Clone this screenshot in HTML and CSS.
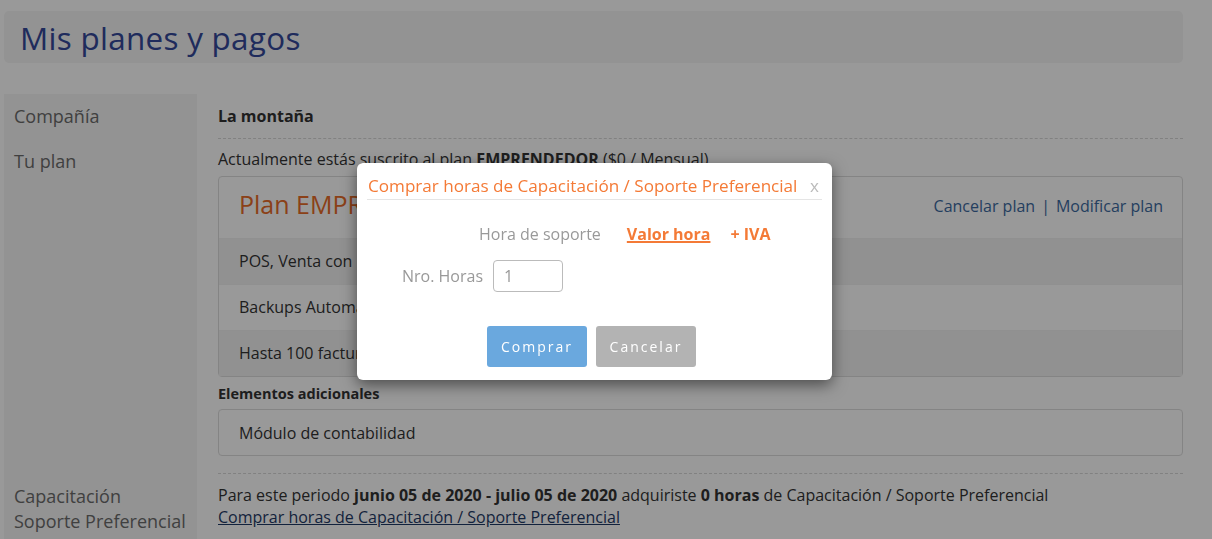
FILE: index.html
```html
<!DOCTYPE html>
<html lang="es">
<head>
    <meta charset="UTF-8">
    <meta name="viewport" content="width=device-width, initial-scale=1.0">
    <title>Mis planes y pagos</title>
    <link rel="stylesheet" href="styles.css">
</head>
<body>
    <div class="page">
        <div class="page-header">
            <h1>Mis planes y pagos</h1>
        </div>

        <div class="settings">
            <div class="labels">
                <div class="label label-company">Compañía</div>
                <div class="label label-plan">Tu plan</div>
                <div class="label label-support">Capacitación<br>Soporte Preferencial</div>
            </div>

            <div class="values">
                <div class="company">La montaña</div>
                <hr class="dashed">

                <p class="current">Actualmente estás suscrito al plan <b>EMPRENDEDOR</b> ($0 / Mensual)</p>
                <div class="plan">
                    <div class="plan-head">
                        <span class="plan-name">Plan EMPRENDEDOR</span>
                        <span class="plan-links"><a href="#">Cancelar plan</a><span class="sep">|</span><a href="#">Modificar plan</a></span>
                    </div>
                    <div class="plan-row striped">POS, Venta con inventario, Compras, Cuentas por Pagar, Cuentas por Cobrar</div>
                    <div class="plan-row">Backups Automáticos diarios</div>
                    <div class="plan-row striped">Hasta 100 facturas electrónicas al mes</div>
                </div>

                <div class="extras-title">Elementos adicionales</div>
                <div class="extras">Módulo de contabilidad</div>
                <hr class="dashed dashed-low">

                <p class="period">Para este periodo <b>junio 05 de 2020 - julio 05 de 2020</b> adquiriste <b>0 horas</b> de Capacitación / Soporte Preferencial<br>
                <a href="#" class="buy-link">Comprar horas de Capacitación / Soporte Preferencial</a></p>
            </div>
        </div>
    </div>

    <div class="overlay"></div>

    <div class="modal">
        <div class="modal-head">
            <span class="modal-title">Comprar horas de Capacitación / Soporte Preferencial</span>
            <span class="modal-close">x</span>
        </div>
        <div class="price-line">
            <span class="price-label">Hora de soporte</span>
            <a href="#" class="price-value">Valor hora</a>
            <span class="price-iva">+ IVA</span>
        </div>
        <div class="hours-line">
            <label for="hours">Nro. Horas</label>
            <input type="text" id="hours" value="1">
        </div>
        <div class="modal-buttons">
            <button class="btn-buy">Comprar</button>
            <button class="btn-cancel">Cancelar</button>
        </div>
    </div>
</body>
</html>
```

FILE: styles.css
```css
body {
    margin: 0;
    font-family: "Open Sans", Arial, sans-serif;
    font-size: 16px;
    color: #333;
    background: #fff;
}
.page {
    padding: 11px 29px 0 4px;
}
.page-header {
    background: #f5f5f5;
    border-radius: 5px;
    height: 52px;
    padding-left: 16px;
    display: flex;
    align-items: center;
}
.page-header h1 {
    margin: 0;
    font-size: 31.4px;
    font-weight: normal;
    color: #34499a;
    letter-spacing: 0.3px;
}
.settings {
    display: flex;
    margin-top: 31px;
}
.labels {
    width: 193px;
    flex: none;
    background: #f5f5f5;
    padding: 10px 0 0 10px;
    box-sizing: border-box;
    color: #6b6b6b;
    font-size: 18px;
    min-height: 460px;
}
.label-plan {
    margin-top: 21px;
}
.label-support {
    margin-top: 311px;
    line-height: 25px;
}
.values {
    flex: 1;
    padding: 11px 0 0 21px;
}
.company {
    font-weight: bold;
    line-height: 22px;
}
hr.dashed {
    border: 0;
    border-top: 1px dashed #d8d8d8;
    margin: 11px 0 0;
}
hr.dashed-low {
    margin-top: 17px;
}
.current {
    margin: 10px 0 7px;
    line-height: 20px;
}
.plan {
    border: 1px solid #ddd;
    border-radius: 4px;
}
.plan-head {
    display: flex;
    justify-content: space-between;
    align-items: flex-start;
    height: 61px;
    padding: 10px 19px 0 20px;
    box-sizing: border-box;
}
.plan-name {
    font-size: 25px;
    color: #e86c28;
}
.plan-links {
    font-size: 16px;
    margin-top: 8px;
}
.plan-links a {
    color: #3d6a9f;
    text-decoration: none;
}
.plan-links .sep {
    color: #3d6a9f;
    margin: 0 6px;
}
.plan-row {
    height: 45px;
    line-height: 45px;
    padding-left: 20px;
    border-top: 1px solid #f0f0f0;
}
.plan-row.striped {
    background: #f2f2f2;
}
.extras-title {
    font-size: 14.5px;
    font-weight: bold;
    margin-top: 6px;
    line-height: 22px;
}
.extras {
    border: 1px solid #ddd;
    border-radius: 4px;
    height: 45px;
    line-height: 47px;
    padding-left: 20px;
    margin-top: 4px;
}
.period {
    margin: 10px 0 0;
    line-height: 22px;
}
.buy-link {
    color: #1f3a66;
}
.overlay {
    position: fixed;
    inset: 0;
    background: rgba(0, 0, 0, 0.4);
}
.modal {
    position: absolute;
    left: 357px;
    top: 163px;
    width: 475px;
    height: 217px;
    background: #fff;
    border-radius: 6px;
    box-shadow: 0 5px 15px rgba(0, 0, 0, 0.5);
    padding: 0 10px;
    box-sizing: border-box;
}
.modal-head {
    display: flex;
    justify-content: space-between;
    align-items: flex-start;
    height: 37px;
    box-sizing: border-box;
    padding: 12px 1px 0;
    border-bottom: 1px solid #e5e5e5;
}
.modal-title {
    color: #f47a36;
    font-size: 17.1px;
    line-height: 22px;
}
.modal-close {
    color: #bbb;
    font-size: 17px;
    line-height: 22px;
    margin-right: 2px;
}
.price-line {
    display: flex;
    align-items: center;
    margin: 23px 0 0 112px;
}
.price-label {
    color: #999;
}
.price-value {
    color: #f47a36;
    font-weight: bold;
    margin-left: 26px;
    text-decoration-thickness: 2px;
}
.price-iva {
    color: #f47a36;
    font-weight: bold;
    margin-left: 20px;
}
.hours-line {
    display: flex;
    align-items: center;
    margin: 15px 0 0 35px;
    color: #999;
}
.hours-line input {
    width: 70px;
    height: 32px;
    box-sizing: border-box;
    border: 1px solid #bbb;
    border-radius: 4px;
    margin-left: 10px;
    padding: 0 10px;
    font-family: inherit;
    font-size: 16px;
    color: #999;
}
.modal-buttons {
    display: flex;
    justify-content: center;
    gap: 9px;
    margin-top: 34px;
    padding-right: 6px;
}
.modal-buttons button {
    width: 100px;
    height: 41px;
    border: none;
    border-radius: 3px;
    color: #fff;
    font-family: inherit;
    font-size: 14px;
    letter-spacing: 2px;
}
.btn-buy { background: #6aa8de; }
.btn-cancel { background: #b3b3b3; }
```
